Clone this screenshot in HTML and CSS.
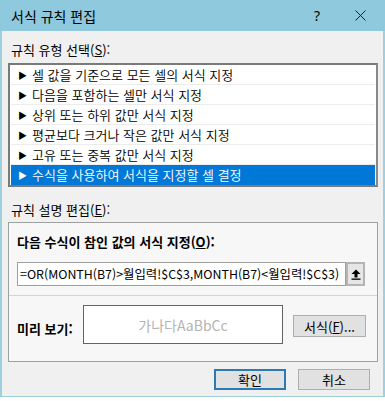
FILE: index.html
```html
<!DOCTYPE html>
<html lang="ko">
<head>
<meta charset="utf-8">
<link rel="stylesheet" href="styles.css">
</head>
<body>
<div class="win">
  <div class="titlebar">
    <span class="title">서식 규칙 편집</span>
    <span class="help">?</span>
    <svg class="close" width="11" height="11" viewBox="0 0 11 11"><path d="M0.5 0.5L10.5 10.5M10.5 0.5L0.5 10.5" stroke="#1a1a1a" stroke-width="1" fill="none"/></svg>
  </div>
  <div class="body">
    <div class="label">규칙 유형 선택(<u>S</u>):</div>
    <div class="list">
      <div class="item"><span class="arr">▶</span>셀 값을 기준으로 모든 셀의 서식 지정</div>
      <div class="item"><span class="arr">▶</span>다음을 포함하는 셀만 서식 지정</div>
      <div class="item"><span class="arr">▶</span>상위 또는 하위 값만 서식 지정</div>
      <div class="item"><span class="arr">▶</span>평균보다 크거나 작은 값만 서식 지정</div>
      <div class="item"><span class="arr">▶</span>고유 또는 중복 값만 서식 지정</div>
      <div class="item sel"><span class="arr">▶</span>수식을 사용하여 서식을 지정할 셀 결정</div>
    </div>
    <div class="label label2">규칙 설명 편집(<u>E</u>):</div>
    <div class="panel">
      <div class="top">
        <div class="bold">다음 수식이 참인 값의 서식 지정(<u>O</u>):</div>
        <div class="frow">
          <div class="formula">=OR(MONTH(B7)&gt;월입력!$C$3,MONTH(B7)&lt;월입력!$C$3)</div>
          <div class="upbtn"><svg width="10" height="11" viewBox="0 0 10 11"><path d="M5 0.5L9.5 5H6.5V8.5H3.5V5H0.5Z" fill="#000"/><rect x="0.5" y="9.5" width="9" height="1.3" fill="#000"/></svg></div>
        </div>
      </div>
      <div class="bottom">
        <div class="bold plabel">미리 보기:</div>
        <div class="preview">가나다AaBbCc</div>
        <div class="btn fmt">서식(<u>F</u>)...</div>
      </div>
    </div>
    <div class="actions">
      <div class="btn ok">확인</div>
      <div class="btn">취소</div>
    </div>
  </div>
</div>
</body>
</html>
```
FILE: styles.css
```css
* { box-sizing: border-box; }
html, body { margin: 0; padding: 0; }
body {
  width: 385px; height: 401px; overflow: hidden;
  background: #ffffff;
  font-family: "Noto Sans CJK KR", "Noto Sans", sans-serif;
  font-size: 13px;
  color: #000;
}
.win {
  width: 385px; height: 397px;
  background: #f0f0f0;
  border-left: 2px solid #9fd0e0;
  border-right: 2px solid #9fd0e0;
  border-bottom: 1px solid #9fd0e0;
  display: flex; flex-direction: column;
}
.titlebar {
  height: 31px;
  background: #8ec9dd;
  display: flex; align-items: center;
  margin: 0 -2px 0 -2px;
  padding-left: 11px;
}
.title { font-size: 14px; flex: 1; }
.help { font-size: 14px; width: 14px; margin-right: 27px; font-family: "Noto Sans", sans-serif; }
.close { margin-right: 19px; }
.body { padding: 0 5px 0 6px; display: flex; flex-direction: column; }
.label { margin-top: 10px; height: 17px; line-height: 17px; padding-left: 3px; }
.label2 { margin-top: 14px; }
.list {
  margin-top: 5px;
  height: 124px;
  border: 2px solid #7a7a7a;
  border-right-color: #8a8a8a;
  background: #fff;
  padding-left: 1px;
  padding-right: 1px;
}
.item {
  height: 20px; line-height: 19px;
  border-bottom: 1px solid #ececec;
  padding-left: 7px;
  font-weight: 350;
}
.item.sel { background: #0078d7; color: #fff; border-bottom: none; }
.arr { font-size: 9px; margin-right: 5px; position: relative; top: -1px; }
.panel {
  margin-top: 4px;
  border: 1px solid #a0a0a0;
  background: #f7f7f7;
  height: 140px;
  display: flex; flex-direction: column;
}
.top { padding: 10px 0 0 8px; height: 73px; border-bottom: 1px solid #d4d4d4; }
.bold { font-weight: bold; height: 17px; line-height: 17px; }
.frow { display: flex; margin-top: 12px; }
.formula {
  width: 329px; height: 24px; line-height: 22px;
  border: 1px solid #a0a0a0; background: #fff;
  padding-left: 2px; white-space: nowrap; overflow: hidden;
  font-size: 12.4px;
}
.upbtn {
  width: 19px; height: 24px;
  border: 2px solid #b4b4b4; background: #e6e6e6;
  display: flex; align-items: center; justify-content: center;
}
.bottom { display: flex; align-items: center; padding-left: 8px; flex: 1; }
.plabel { width: 66px; }
.preview {
  width: 200px; height: 39px;
  border: 1px solid #646464; background: #fff;
  color: #b4b4b4; font-size: 14px;
  display: flex; align-items: center; justify-content: center;
  margin-top: -8px;
}
.btn {
  width: 72px; height: 21px;
  border: 1px solid #adadad; background: #e1e1e1;
  display: flex; align-items: center; justify-content: center;
}
.fmt { width: 73px; height: 22px; margin-left: 10px; margin-top: -5px; }
.actions { display: flex; justify-content: flex-end; gap: 12px; padding-right: 8px; margin-top: 7px; }
.ok { border: 2px solid #2b79b5; }
u { text-decoration: underline; text-underline-offset: 1px; }
```
